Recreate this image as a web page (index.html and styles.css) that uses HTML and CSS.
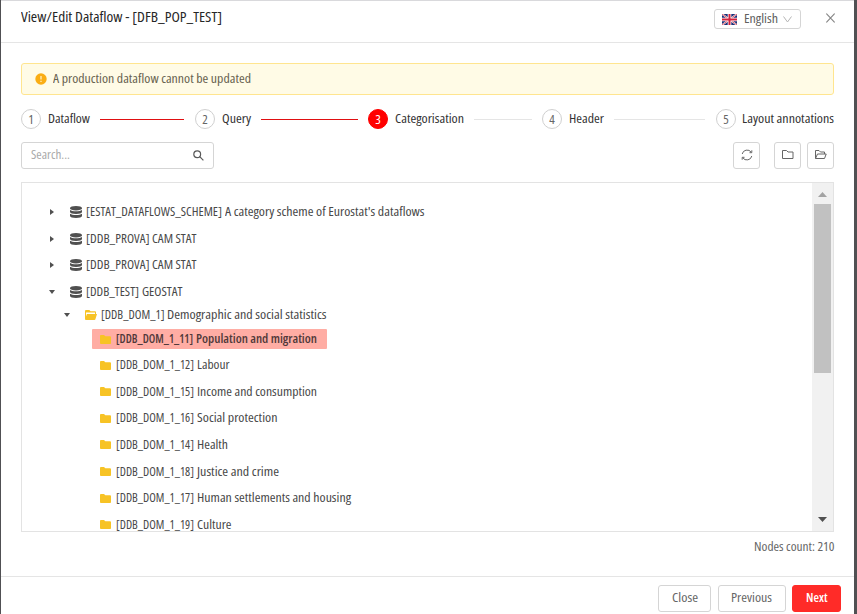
FILE: index.html
```html
<!DOCTYPE html>
<html lang="en">
<head>
<meta charset="utf-8">
<title>View/Edit Dataflow</title>
<link rel="stylesheet" href="styles.css">
</head>
<body>
<svg class="defs" aria-hidden="true">
  <symbol id="db" viewBox="0 0 12 12"><path d="M0 2C0 .8 2.6 0 6 0s6 .8 6 2v.6C12 3.7 9.4 4.500 6 4.500S0 3.700 0 2.600zM0 4c1.200 1 3.500 1.300 6 1.300S10.800 5 12 4v2c0 1.200-2.600 1.900-6 1.900S0 7.200 0 6zM0 7.700c1.200.9 3.500 1.200 6 1.200s4.800-.3 6-1.200V10c0 1.200-2.600 2-6 2s-6-.8-6-2z"/></symbol>
  <symbol id="folder" viewBox="0 0 11 9"><path d="M0 .9Q0 0 .9 0H4l1.300 1.300H10q1 0 1 .9v6q0 .8-.9.800H.9Q0 9 0 8.100z"/></symbol>
  <symbol id="open" viewBox="0 0 12 10"><path fill-rule="evenodd" d="M0 1Q0 0 1 0h3.300l1.300 1.300H10q1 0 1 1V4h1l-1.600 5.300q-.2.700-.9.700H.9Q0 10 0 9zM1 2.400v4L1.900 4H10V2.400z"/></symbol>
  <symbol id="right" viewBox="0 0 4 6"><path d="M0 0l4 3L0 6z"/></symbol>
  <symbol id="down" viewBox="0 0 6 4"><path d="M0 0h6L3 4z"/></symbol>
</svg>
<div class="modal">
  <header class="header">
    <h1 class="title"><span class="fit" data-w="201">View/Edit Dataflow - [DFB_POP_TEST]</span></h1>
    <button class="lang">
      <svg class="flag" viewBox="0 0 15 11"><path fill="#1b2f78" d="M0 0h15v11H0z"/><path stroke="#fff" stroke-width="1.800" d="M0 0l15 11M15 0L0 11"/><path stroke="#d52b40" stroke-width=".8" d="M0 0l15 11M15 0L0 11"/><path stroke="#fff" stroke-width="3.600" d="M7.500 0v11M0 5.500h15"/><path stroke="#d4213d" stroke-width="2" d="M7.500 0v11M0 5.500h15"/></svg>
      <span class="fit" data-w="34">English</span>
      <svg class="chev" viewBox="0 0 9 7"><path d="M.5.500l4 5.500 4-5.500"/></svg>
    </button>
    <svg class="close" viewBox="0 0 9 10"><path d="M.4.500l8.200 9M8.600.500l-8.200 9"/></svg>
  </header>
  <main class="body">
    <div class="alert">
      <svg class="warn" viewBox="0 0 12 12"><circle cx="6" cy="6" r="5.700" fill="#faad14"/><path d="M6 3v3.600M6 7.800v1.200" stroke="#fff3cf" stroke-width="1.200"/></svg>
      <span class="fit" data-w="198">A production dataflow cannot be updated</span>
    </div>
    <div class="steps">
      <div class="step done"><b>1</b><span class="fit" data-w="42">Dataflow</span></div>
      <div class="step done"><b>2</b><span class="fit" data-w="29">Query</span></div>
      <div class="step active"><b>3</b><span class="fit" data-w="69">Categorisation</span></div>
      <div class="step"><b>4</b><span class="fit" data-w="35">Header</span></div>
      <div class="step last"><b>5</b><span class="fit" data-w="92">Layout annotations</span></div>
    </div>
    <div class="tools">
      <div class="search"><span class="fit" data-w="39">Search...</span>
        <svg viewBox="0 0 11 11"><circle cx="4.200" cy="4.200" r="3.400"/><path d="M6.700 6.700l3.700 3.700"/></svg></div>
      <button class="icon-btn refresh"><svg viewBox="0 0 12 12"><path d="M1.200 5A5 5 0 0 1 10.200 3.200M10.800 7A5 5 0 0 1 1.800 8.800M10.800 1.300v2.400H8.500M1.200 10.700V8.300h2.300"/></svg></button>
      <button class="icon-btn"><svg viewBox="0 0 12 12"><path d="M.5 1.500h4l1.500 1.500h5v6.500H.5z"/></svg></button>
      <button class="icon-btn"><svg viewBox="0 0 12 12"><path d="M.5 9.500v-8h3.500l1.500 1.500h4v2M.5 9.500L2.500 5h8.700L9.500 9.500z"/></svg></button>
    </div>
    <div class="tree-box">
      <ul class="tree">
        <li class="row"><svg class="caret"><use href="#right"/></svg><svg class="db"><use href="#db"/></svg><span class="fit" data-w="136">[ESTAT_DATAFLOWS_SCHEME]</span> <span class="fit" data-w="199.500">A category scheme of Eurostat's dataflows</span></li>
        <li class="row"><svg class="caret"><use href="#right"/></svg><svg class="db"><use href="#db"/></svg><span class="fit" data-w="63.500">[DDB_PROVA]</span> <span class="fit" data-w="44.500">CAM STAT</span></li>
        <li class="row"><svg class="caret"><use href="#right"/></svg><svg class="db"><use href="#db"/></svg><span class="fit" data-w="63.500">[DDB_PROVA]</span> <span class="fit" data-w="44.500">CAM STAT</span></li>
        <li class="row"><svg class="caret down"><use href="#down"/></svg><svg class="db"><use href="#db"/></svg><span class="fit" data-w="53">[DDB_TEST]</span> <span class="fit" data-w="40.500">GEOSTAT</span></li>
        <li class="row level-1"><svg class="caret down"><use href="#down"/></svg><svg class="open"><use href="#open"/></svg><span class="fit" data-w="63.500">[DDB_DOM_1]</span> <span class="fit" data-w="159.500">Demographic and social statistics</span></li>
        <li class="row level-2 selected"><svg class="folder"><use href="#folder"/></svg><span class="fit" data-w="77">[DDB_DOM_1_11]</span> <span class="fit" data-w="121">Population and migration</span></li>
        <li class="row level-2"><svg class="folder"><use href="#folder"/></svg><span class="fit" data-w="78">[DDB_DOM_1_12]</span> <span class="fit" data-w="32.500">Labour</span></li>
        <li class="row level-2"><svg class="folder"><use href="#folder"/></svg><span class="fit" data-w="78">[DDB_DOM_1_15]</span> <span class="fit" data-w="120">Income and consumption</span></li>
        <li class="row level-2"><svg class="folder"><use href="#folder"/></svg><span class="fit" data-w="78">[DDB_DOM_1_16]</span> <span class="fit" data-w="80.500">Social protection</span></li>
        <li class="row level-2"><svg class="folder"><use href="#folder"/></svg><span class="fit" data-w="78">[DDB_DOM_1_14]</span> <span class="fit" data-w="31">Health</span></li>
        <li class="row level-2"><svg class="folder"><use href="#folder"/></svg><span class="fit" data-w="78">[DDB_DOM_1_18]</span> <span class="fit" data-w="82">Justice and crime</span></li>
        <li class="row level-2"><svg class="folder"><use href="#folder"/></svg><span class="fit" data-w="78">[DDB_DOM_1_17]</span> <span class="fit" data-w="154">Human settlements and housing</span></li>
        <li class="row level-2"><svg class="folder"><use href="#folder"/></svg><span class="fit" data-w="78">[DDB_DOM_1_19]</span> <span class="fit" data-w="34.500">Culture</span></li>
      </ul>
      <div class="scrollbar"><svg class="up" viewBox="0 0 9 5"><path d="M4.500 0L9 5H0z"/></svg><div class="thumb"></div><svg class="dn" viewBox="0 0 9 5"><path d="M0 0h9L4.500 5z"/></svg></div>
    </div>
    <div class="count"><span class="fit" data-w="80.500">Nodes count: 210</span></div>
  </main>
  <footer class="footer">
    <button class="btn close-btn"><span class="fit" data-w="26">Close</span></button>
    <button class="btn prev"><span class="fit" data-w="41">Previous</span></button>
    <button class="btn next"><span class="fit" data-w="21.500">Next</span></button>
  </footer>
</div>
<script src="fit.js"></script>
</body>
</html>
```
FILE: styles.css
```css
* { box-sizing: border-box; }
body {
  margin: 0;
  background: #505053;
  color: #484848;
  font: 375 12.5px/20px "Open Sans", "Noto Sans", sans-serif;
  font-stretch: 75%;
}
button { font: inherit; font-stretch: inherit; color: inherit; padding: 0; }
svg { flex: none; display: block; }
.defs { position: absolute; width: 0; height: 0; }
.fit { display: block; flex: none; white-space: nowrap; }
.fit > span { display: inline-block; transform-origin: 0 50%; }
.modal {
  margin: 0 3px 0 1px;
  height: 614px;
  overflow: hidden;
  background: #fff;
  border-top: 1px solid #d9d9dc;
  display: flex;
  flex-direction: column;
}
.header {
  height: 42px;
  flex: none;
  display: flex;
  align-items: flex-start;
  padding: 0 19px 0 20px;
  border-bottom: 1px solid #e5e5e5;
}
.title { margin: 5px auto 0 0; font-size: 15px; line-height: 20px; font-weight: 375; color: #262626; }
.lang {
  width: 87px;
  height: 20px;
  margin: 8px 25px 0 0;
  display: flex;
  align-items: center;
  padding-left: 7px;
  border: 1px solid #d5d5d5;
  border-radius: 3px;
  background: #fff;
  color: #606060;
}
.flag { width: 15px; height: 11px; margin-right: 5px; }
.chev { width: 9px; height: 7px; margin-left: 7px; fill: none; stroke: #b5b5b5; }
.close { width: 9px; height: 10px; margin-top: 12px; fill: none; stroke: #868686; stroke-width: 1.1; }
.body { padding: 20px 20px 0; height: 533px; flex: none; }
.alert {
  height: 32px;
  display: flex;
  align-items: center;
  padding-left: 13px;
  gap: 6px;
  border: 1px solid #ffe58f;
  border-radius: 3px;
  background: #fffbe6;
  color: #67624f;
}
.warn { width: 12px; height: 12px; }
.steps { display: grid; grid-template-columns: 174px 173px 174px 174px 118px; margin-top: 14px; height: 20px; color: #333; }
.step { display: flex; align-items: center; }
.step b {
  width: 20px;
  height: 20px;
  flex: none;
  margin-right: 6.5px;
  border: 1px solid #d0d0d0;
  border-radius: 50%;
  text-align: center;
  line-height: 18px;
  font-weight: 375;
  font-size: 13px;
  color: #666;
}
.step::after { content: ""; height: 1px; flex: 1; margin: 0 11px 0 10px; background: #e5e5e5; }
.step.done::after { background: #e00f12; }
.step.active b { background: #f00; border-color: #f00; color: #fff; font-weight: 500; }
.step.last::after { display: none; }
.step.last b { margin-right: 6px; }
.step.active::after, .step.done + .step.done::after { margin-right: 10px; }
.tools { display: flex; margin-top: 13px; }
.search {
  width: 193px;
  height: 27px;
  margin-right: auto;
  padding: 0 9px 1px 9px;
  display: flex;
  align-items: center;
  justify-content: space-between;
  border: 1px solid #d5d5d5;
  border-radius: 3px;
  color: #aaa;
}
.search svg { width: 11px; height: 11px; fill: none; stroke: #595959; stroke-width: 1.2; }
.icon-btn {
  width: 27px;
  height: 27px;
  margin-left: 6px;
  display: flex;
  align-items: center;
  justify-content: center;
  padding: 0 0 1px;
  border: 1px solid #d5d5d5;
  border-radius: 3px;
  background: #fff;
}
.icon-btn svg { width: 12px; height: 12px; fill: none; stroke: #666; }
.refresh { margin-right: 8px; }
.tree-box { height: 350px; margin-top: 13px; display: flex; border: 1px solid #e3e3e3; overflow: hidden; }
.tree { flex: 1; margin: 0; padding: 15.7px 0 0 28px; list-style: none; }
.row { display: flex; align-items: center; height: 26.67px; }
.row .fit + .fit { margin-left: 3px; }
.caret { width: 4px; height: 6px; margin-right: 16px; fill: #505050; }
.caret.down { width: 6px; height: 4px; margin: 0 15px 0 -1px; }
.db { width: 12px; height: 12px; margin-right: 3.5px; fill: #505050; }
.open { width: 12px; height: 10px; margin-right: 3.5px; fill: #f7c325; }
.folder { width: 11px; height: 9px; margin-right: 4.500px; fill: #f7c325; }
.level-1 { height: 19px; padding-left: 15px; }
.level-1 .caret { margin-right: 15px; }
.level-2 { padding-left: 50px; }
.selected {
  width: 235px;
  height: 20px;
  margin: 4.700px 0 2.700px 42px;
  padding-left: 8px;
  border-radius: 1px;
  background: #ffada4;
  color: #51393a;
  font-weight: 600;
}
.scrollbar { width: 21px; display: flex; flex-direction: column; align-items: center; background: #f1f1f1; }
.scrollbar svg { width: 9px; height: 5px; }
.up { margin-top: 9px; fill: #a3a3a3; }
.thumb { width: 17px; height: 169px; margin-top: 7px; background: #c1c1c1; }
.dn { margin: auto 0 9px; fill: #505050; }
.count { display: flex; justify-content: flex-end; margin-top: 5px; color: #666; }
.footer {
  flex: 1;
  display: flex;
  justify-content: flex-end;
  gap: 7px;
  padding: 8px 13px 0 0;
  border-top: 1px solid #e5e5e5;
}
.btn {
  height: 27px;
  display: flex;
  align-items: center;
  justify-content: center;
  padding: 0 2px 1px 0;
  border: 1px solid #d5d5d5;
  border-radius: 3px;
  background: #fff;
  color: #666;
}
.close-btn { width: 53px; }
.prev { width: 68px; padding-right: 5px; }
.next { width: 49px; margin-left: -1px; padding-right: 0; border-color: #ff2b28; background: #ff2b28; color: #fff; font-weight: 600; }
```
FILE: fit.js
```js
document.querySelectorAll(".fit").forEach(function (el) {
  var width = parseFloat(el.dataset.w);
  var inner = document.createElement("span");
  inner.textContent = el.textContent;
  el.textContent = "";
  el.style.width = "max-content";
  el.appendChild(inner);
  var natural = inner.getBoundingClientRect().width;
  el.style.width = width + "px";
  inner.style.transform = "scaleX(" + width / natural + ")";
});
```
